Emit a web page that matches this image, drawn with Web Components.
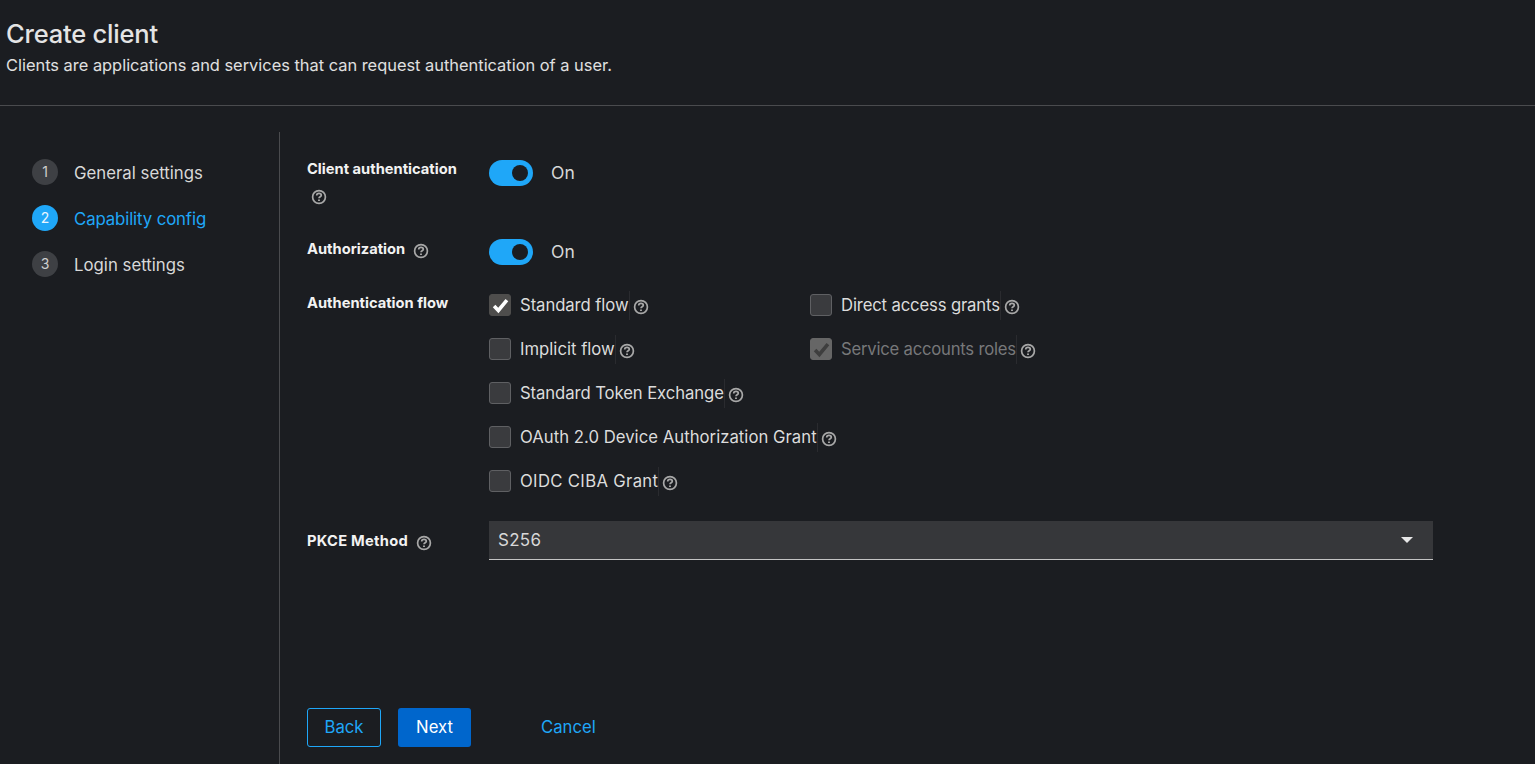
<!DOCTYPE html>
<html lang="en">
<head>
<meta charset="utf-8">
<title>Create client</title>
<style>
  html, body { margin: 0; height: 100%; }
  body {
    background: #1b1d21;
    color: #e0e0e0;
    font-family: Inter, "Noto Sans", "Liberation Sans", sans-serif;
    font-size: 16px;
    overflow: hidden;
  }
</style>
</head>
<body>
<kc-page title="Create client" subtitle="Clients are applications and services that can request authentication of a user.">
  <kc-wizard-nav slot="nav">
    <kc-nav-step num="1">General settings</kc-nav-step>
    <kc-nav-step num="2" current style="letter-spacing:-0.12px">Capability config</kc-nav-step>
    <kc-nav-step num="3">Login settings</kc-nav-step>
  </kc-wizard-nav>

  <kc-form-row label="Client authentication" help="below" style="height:79px">
    <kc-switch></kc-switch>
  </kc-form-row>
  <kc-form-row label="Authorization" help="inline" style="height:55px; --label-top:1px">
    <kc-switch></kc-switch>
  </kc-form-row>
  <kc-form-row label="Authentication flow" style="height:227px">
    <kc-check-grid>
      <kc-check checked style="letter-spacing:-0.08px">Standard flow</kc-check>
      <kc-check style="letter-spacing:-0.15px">Direct access grants</kc-check>
      <kc-check>Implicit flow</kc-check>
      <kc-check checked disabled style="letter-spacing:-0.23px">Service accounts roles</kc-check>
      <kc-check style="letter-spacing:-0.09px">Standard Token Exchange</kc-check>
      <span></span>
      <kc-check style="letter-spacing:0.03px">OAuth 2.0 Device Authorization Grant</kc-check>
      <span></span>
      <kc-check style="letter-spacing:0.33px">OIDC CIBA Grant</kc-check>
    </kc-check-grid>
  </kc-form-row>
  <kc-form-row label="PKCE Method" help="inline" style="--label-top:11px; letter-spacing:0.27px">
    <kc-select>S256</kc-select>
  </kc-form-row>

  <kc-footer slot="footer">
    <kc-button variant="secondary">Back</kc-button>
    <kc-button variant="primary">Next</kc-button>
    <kc-button variant="link">Cancel</kc-button>
  </kc-footer>
</kc-page>

<script>
const define = (name, css, html) => {
  customElements.define(name, class extends HTMLElement {
    constructor() {
      super();
      this.attachShadow({mode: 'open'});
      this.shadowRoot.innerHTML = `<style>${css}</style>${typeof html === 'function' ? html(this) : html}`;
    }
  });
};

const helpIcon = `<svg class="help" viewBox="0 0 16 16" width="16" height="16" fill="none" stroke="#a8a8a8" aria-hidden="true">
  <circle cx="8" cy="8" r="6.4" stroke-width="1.7"/>
  <path d="M5.7 6.5c0-1.4 1-2.2 2.3-2.2s2.3.8 2.3 2c0 1.5-2.3 1.5-2.3 3" stroke-width="1.7"/>
  <path d="M8 10.4v1.7" stroke-width="1.9"/>
</svg>`;

define('kc-page', `
  :host { display: flex; flex-direction: column; height: 764px; }
  header { height: 106px; box-sizing: border-box; padding: 16px 6px 0; border-bottom: 1px solid #4a4b4e; flex: none; }
  h1 { margin: 0; font-size: 25.5px; line-height: 36px; font-weight: 500; letter-spacing: -0.2px; color: #e4e4e4; }
  p { margin: 0; font-size: 16.4px; line-height: 27px; color: #e0e0e0; }
  .body { display: flex; flex: 1; padding-top: 26px; min-height: 0; }
  nav { width: 280px; flex: none; box-sizing: border-box; border-right: 1px solid #4a4b4e; }
  main { flex: 1; display: flex; flex-direction: column; padding: 28px 102px 17px 27px; }
  .fields { flex: 1; }
`, el => `
  <header><h1>${el.getAttribute('title')}</h1><p>${el.getAttribute('subtitle')}</p></header>
  <div class="body">
    <nav><slot name="nav"></slot></nav>
    <main><div class="fields"><slot></slot></div><slot name="footer"></slot></main>
  </div>`);

define('kc-wizard-nav', `
  :host { display: flex; flex-direction: column; gap: 20px; padding: 27px 0 0 32px; }
`, `<slot></slot>`);

define('kc-nav-step', `
  :host { display: flex; align-items: center; gap: 16px; height: 26px; color: #d8d8d8; font-size: 16.8px; }
  :host([current]) { color: #1fa7f8; }
  span { padding-top: 1px; }
  b { width: 26px; height: 26px; border-radius: 50%; background: #3e4044; color: #cfcfcf; font-weight: 400; font-size: 14px; line-height: 25px; display: flex; justify-content: center; flex: none; }
  :host([current]) b { background: #1fa7f8; color: #e8f5ff; }
`, el => `<b>${el.getAttribute('num')}</b><span><slot></slot></span>`);

define('kc-form-row', `
  :host { display: grid; grid-template-columns: 182px 944px; }
  .label { font-size: 14.7px; font-weight: 700; line-height: 18px; color: #f2f2f2; display: block; padding-top: var(--label-top, 0); }
  .inline { display: inline-block; margin-left: 8px; vertical-align: -5px; }
  .below { display: block; margin: 11px 0 0 4px; }
  svg { display: block; }
`, el => {
  const help = el.getAttribute('help');
  const icon = help ? `<span class="${help}">${helpIcon}</span>` : '';
  return `<div class="label">${el.getAttribute('label')}${icon}</div><div><slot></slot></div>`;
});

define('kc-switch', `
  :host { display: flex; align-items: center; height: 26px; gap: 18px; font-size: 17.5px; color: #d8d8d8; }
  span { margin-top: -2px; }
  i { display: block; position: relative; width: 44px; height: 26px; border-radius: 13px; background: #1fa7f8; }
  i::after { content: ""; position: absolute; top: 5px; right: 5px; width: 16px; height: 16px; border-radius: 50%; background: #1b1d21; }
`, `<i></i><span>On</span>`);

define('kc-check-grid', `
  :host { display: grid; grid-template-columns: 321px auto; row-gap: 22px; justify-content: start; }
`, `<slot></slot>`);

define('kc-check', `
  :host { display: flex; align-items: center; height: 22px; font-size: 16.7px; color: #dcdcdc; white-space: nowrap; }
  .box { width: 22px; height: 22px; box-sizing: border-box; border-radius: 3px; border: 1px solid #5f6063; background: #3a3b3e; flex: none; display: flex; align-items: center; justify-content: center; }
  :host([checked]) .box { border-color: #4e4d4c; background: #4e4d4c; }
  :host([disabled]) .box { border-color: #666; background: #666; }
  .box svg { display: none; }
  :host([checked]) .box svg { display: block; }
  .text { margin-left: 9px; height: 29px; line-height: 28px; border-right: 1px solid #2a2b2f; }
  :host([disabled]) .text { color: #77787a; }
  .help { margin-left: 3px; display: block; margin-top: 3px; flex: none; }
`, el => `<span class="box"><svg viewBox="0 0 16 16" width="19" height="19" fill="none" stroke="${el.hasAttribute('disabled') ? '#3e3e3e' : '#fff'}" stroke-width="3"><path d="M2.6 8.4l3.6 3.8L13.4 3.4"/></svg></span>
  <span class="text"><slot></slot></span>${helpIcon}`);

define('kc-select', `
  :host { display: flex; align-items: center; justify-content: space-between; box-sizing: border-box; height: 39px; padding: 0 20px 0 9px; background: #36373a; border-bottom: 1.5px solid #c4c4c4; font-size: 17px; color: #d8d8d8; }
  i { width: 0; height: 0; border-left: 6px solid transparent; border-right: 6px solid transparent; border-top: 6px solid #e8e8e8; }
`, `<span><slot></slot></span><i></i>`);

define('kc-footer', `
  :host { display: flex; align-items: center; }
`, `<slot></slot>`);

define('kc-button', `
  :host { display: inline-flex; align-items: center; justify-content: center; height: 39px; box-sizing: border-box; border-radius: 3px; font-size: 16.7px; line-height: 36px; padding-bottom: 2px; margin-right: 17px; }
  :host([variant=secondary]) { width: 74px; border: 1px solid #1fa7f8; color: #1fa7f8; }
  :host([variant=primary]) { width: 73px; background: #0066cc; color: #fff; margin-right: 0; }
  :host([variant=link]) { color: #1fa7f8; margin: 0 0 0 70px; }
`, `<slot></slot>`);
</script>
</body>
</html>
